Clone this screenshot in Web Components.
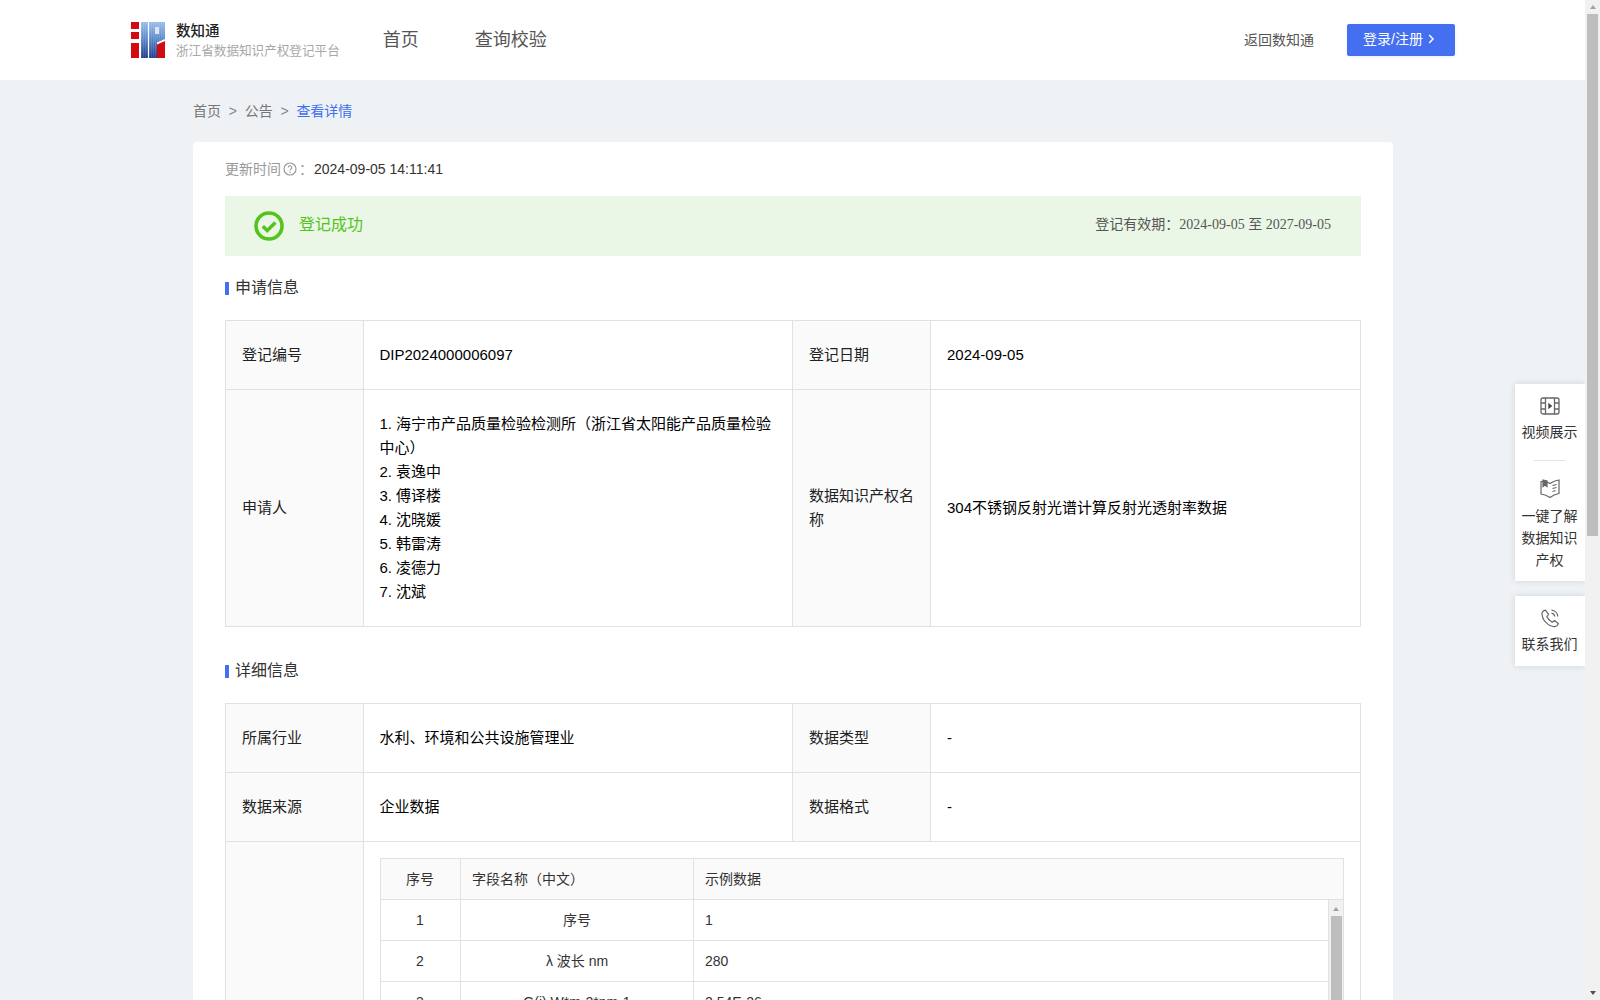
<!DOCTYPE html>
<html lang="zh-CN">
<head>
<meta charset="utf-8">
<title>查看详情</title>
<style>
html,body{margin:0;padding:0;height:1000px;overflow:hidden;background:#eef2f5}
body{font:14px/22px "Liberation Sans","Noto Sans CJK SC",sans-serif;color:#333}
::-webkit-scrollbar{display:none}
</style>
</head>
<body>
<app-shell>
  <app-header></app-header>
  <bread-crumb>
    <a>首页</a><a>公告</a><a current>查看详情</a>
  </bread-crumb>
  <detail-card>
    <update-line time="2024-09-05 14:11:41"></update-line>
    <status-banner status="登记成功" from="2024-09-05" to="2027-09-05"></status-banner>
    <section-title style="margin-top:21px">申请信息</section-title>
    <info-grid style="margin-top:21px">
      <info-label>登记编号</info-label>
      <info-value near>DIP2024000006097</info-value>
      <info-label>登记日期</info-label>
      <info-value>2024-09-05</info-value>
      <info-label>申请人</info-label>
      <info-value near>1. 海宁市产品质量检验检测所（浙江省太阳能产品质量检验中心）<br>2. 袁逸中<br>3. 傅译楼<br>4. 沈晓媛<br>5. 韩雷涛<br>6. 凌德力<br>7. 沈斌</info-value>
      <info-label>数据知识产权名称</info-label>
      <info-value>304不锈钢反射光谱计算反射光透射率数据</info-value>
    </info-grid>
    <section-title style="margin-top:33px">详细信息</section-title>
    <info-grid style="margin-top:21px">
      <info-label>所属行业</info-label>
      <info-value near>水利、环境和公共设施管理业</info-value>
      <info-label>数据类型</info-label>
      <info-value>-</info-value>
      <info-label>数据来源</info-label>
      <info-value near>企业数据</info-value>
      <info-label>数据格式</info-label>
      <info-value>-</info-value>
      <info-label></info-label>
      <info-value wide><field-table></field-table></info-value>
    </info-grid>
  </detail-card>
  <side-dock></side-dock>
  <page-scrollbar></page-scrollbar>
</app-shell>

<script>
function el(name, html, init){
  customElements.define(name, class extends HTMLElement{
    constructor(){
      super();
      this.attachShadow({mode:'open'}).innerHTML = html;
      if(init) this._init = init;
    }
    connectedCallback(){ if(this._init) this._init(this.shadowRoot, this); }
  });
}

el('app-shell', `<style>
:host{display:block;position:relative;height:1000px;width:1600px;overflow:hidden}
.page{width:1585px;height:1000px;overflow:hidden}
</style><div class="page"><slot></slot></div>`);

el('app-header', `<style>
:host{display:flex;align-items:center;height:80px;background:#fff;padding:0 130px 0 131px;box-sizing:border-box}
svg{display:block;flex:none}
.brand{margin:2px 0 0 11px;flex:none}
.t{font-size:14.5px;line-height:18px;font-weight:500;color:#222}
.s{font-size:12.6px;line-height:18px;color:#a8a8a8;margin-top:2px;white-space:nowrap}
nav{display:flex;gap:56px;margin-left:43px;font-size:18px;color:#555}
.sp{flex:1}
.back{color:#555;font-size:14px;margin:0 33px 1px 0}
.btn{display:flex;align-items:center;width:108px;height:32px;box-sizing:border-box;padding:0 0 2px 16px;background:#436ff0;color:#fff;border-radius:2px;box-shadow:0 1px 3px rgba(67,111,240,.12)}
.btn svg{margin-left:5px}
</style>
<svg width="34" height="36" viewBox="0 0 34 36">
  <defs>
    <linearGradient id="b" x1="0" y1="0" x2="0" y2="1"><stop offset="0" stop-color="#98bdea"/><stop offset=".45" stop-color="#5f8ccc"/><stop offset="1" stop-color="#1f3c8c"/></linearGradient>
    <pattern id="st" width="2" height="2" patternUnits="userSpaceOnUse"><rect width="1" height="2" fill="#fff" opacity=".12"/></pattern>
  </defs>
  <rect x="0" y="0" width="8" height="7" fill="#d40a12"/>
  <rect x="0" y="10" width="8" height="7" fill="#d40a12"/>
  <rect x="0" y="21" width="8" height="15" fill="#d40a12"/>
  <rect x="10" y="0" width="7" height="36" fill="url(#b)"/>
  <path d="M18 0H34V17L26 20.5V36H18Z" fill="url(#b)"/>
  <rect x="10" y="0" width="7" height="36" fill="url(#st)"/>
  <path d="M18 0H34V17L26 20.5V36H18Z" fill="url(#st)"/>
  <rect x="24" y="5" width="4" height="7" fill="#dbe6f6"/>
  <path d="M26 22.5L34 19V36H26Z" fill="#d40a12"/>
</svg>
<div class="brand"><div class="t">数知通</div><div class="s">浙江省数据知识产权登记平台</div></div>
<nav><span>首页</span><span>查询校验</span></nav>
<div class="sp"></div>
<div class="back">返回数知通</div>
<div class="btn">登录/注册<svg width="7" height="10" viewBox="0 0 7 10"><path d="M1.2 1L5 5L1.2 9" fill="none" stroke="#fff" stroke-width="1.5"/></svg></div>`);

el('bread-crumb', `<style>
:host{display:flex;height:62px;box-sizing:border-box;padding:20px 0 0 193px;color:#888;font-size:14px;line-height:22px}
::slotted(a){color:#777}
::slotted(a[current]){color:#3f6ff0}
::slotted(a:not(:last-child))::after{content:">";margin:0 7.75px;color:#888}
</style><slot></slot>`);

el('detail-card', `<style>
:host{display:block;width:1200px;box-sizing:border-box;margin-left:193px;padding:16px 32px 40px;background:#fff;border-radius:4px}
</style><slot></slot>`);

el('update-line', `<style>
:host{display:flex;align-items:center;color:#999;font-size:14px;line-height:22px}
svg{margin:0 0 0 2px}
.c{margin:0 1px 0 2px}
.v{color:#333}
</style><span>更新时间</span><svg width="14" height="14" viewBox="0 0 14 14"><circle cx="7" cy="7" r="6" fill="none" stroke="#999" stroke-width="1.2"/><path d="M5.2 5.6a1.8 1.8 0 1 1 2.7 1.5c-.6.4-.9.7-.9 1.4" fill="none" stroke="#999" stroke-width="1.1"/><circle cx="7" cy="10.3" r=".7" fill="#999"/></svg><span class="c">：</span><span class="v"></span>`,
(r,h)=>{r.querySelector('.v').textContent=h.getAttribute('time')});

el('status-banner', `<style>
:host{display:flex;align-items:center;height:60px;margin-top:16px;background:#ebf7e6;padding:0 30px 0 29px}
.st{margin:0 0 2px 15px;font-size:16px;color:#52c41a}
.sp{flex:1}
.r{color:#555;font-size:14px;margin-bottom:3px}
.d{font-family:"Liberation Serif","Noto Sans CJK SC",serif}
</style>
<svg width="30" height="30" viewBox="0 0 30 30"><circle cx="15" cy="15" r="13" fill="none" stroke="#52c41a" stroke-width="3.6"/><path d="M8.8 15.2l4.4 4.3 8.2-8" fill="none" stroke="#52c41a" stroke-width="3.4"/></svg>
<span class="st"></span><span class="sp"></span>
<span class="r">登记有效期：<span class="d"></span></span>`,
(r,h)=>{r.querySelector('.st').textContent=h.getAttribute('status');
r.querySelector('.d').textContent=h.getAttribute('from')+' 至 '+h.getAttribute('to')});

el('section-title', `<style>
:host{display:flex;align-items:center;font-size:16px;line-height:22px;color:#333}
i{display:block;width:4px;height:13px;background:#436ff0;margin:1px 6px 0 0}
</style><i></i><slot></slot>`);

el('info-grid', `<style>
:host{display:grid;grid-template-columns:138px 429px 138px 1fr;border-top:1px solid #e1e1e1;border-left:1px solid #e1e1e1;font-size:15px}
</style><slot></slot>`);

el('info-label', `<style>
:host{display:flex;align-items:center;box-sizing:border-box;padding:22px 16px;background:#fafafa;color:#222;line-height:24px;border-right:1px solid #e1e1e1;border-bottom:1px solid #e1e1e1}
div{margin-top:-1px}
</style><div><slot></slot></div>`);

el('info-value', `<style>
:host{display:flex;align-items:center;box-sizing:border-box;padding:22px 16px;color:#000;line-height:24px;border-right:1px solid #e1e1e1;border-bottom:1px solid #e1e1e1;min-width:0}
:host([near]){padding-left:15.4px;padding-right:16.6px}
:host([wide]){grid-column:span 3;padding:16px 16px 0;display:block}
</style><div><slot></slot></div>`);

el('field-table', `<style>
:host{display:block;border:1px solid #e1e1e1;border-bottom:0;color:#333;line-height:22px;font-size:14px}
.row{display:grid;grid-template-columns:80px 233px 1fr;border-bottom:1px solid #e1e1e1}
.row>div{height:40px;line-height:40px;border-right:1px solid #e1e1e1;padding:0 11px;text-align:center;white-space:nowrap;overflow:hidden}
.row>div:first-child{padding-right:12px}
.row>div:last-child{text-align:left;border-right:0}
.head{background:#fafafa}
.head>div:nth-child(2){text-align:left}
.body{display:flex;height:300px}
.rows{flex:1;min-width:0}
.bar{flex:none;width:14px;border-left:1px solid #e1e1e1;background:#f1f1f1;display:flex;flex-direction:column;align-items:center}
.bar b{display:block;width:0;height:0;margin:7px 0 5px;border:3.5px solid transparent;border-top:0;border-bottom:4px solid #a3a3a3}
.bar u{display:block;width:11px;flex:1;background:#bebebe}
</style>
<div class="row head"><div>序号</div><div>字段名称（中文）</div><div>示例数据</div></div>
<div class="body"><div class="rows">
<div class="row"><div>1</div><div>序号</div><div>1</div></div>
<div class="row"><div>2</div><div>λ 波长 nm</div><div>280</div></div>
<div class="row"><div>3</div><div>G(i) W*m-2*nm-1</div><div>2.54E-26</div></div>
</div><div class="bar"><b></b><u></u></div></div>`);

el('side-dock', `<style>
:host{position:absolute;right:15px;top:384px;width:70px;display:flex;flex-direction:column;gap:15px;color:#333;font-size:14px;line-height:22px;text-align:center}
.card{background:#fff;box-shadow:0 0 6px rgba(60,70,90,.18);padding:11px 0 10px}
.it{display:flex;flex-direction:column;align-items:center}
.it span{margin-right:1px}
svg{display:block;margin-bottom:4px;stroke:#666;fill:none}
hr{border:0;height:1px;background:#e4e4e4;width:32px;margin:17px auto 16px}
.bk{margin-bottom:6px}
</style>
<div class="card">
 <div class="it"><svg width="22" height="22" viewBox="0 0 22 22" stroke-width="1.3"><rect x="2" y="3" width="18" height="16" rx="2"/><path d="M6.5 3V19M15.5 3V19M2 8H6.5M2 14H6.5M15.5 8H20M15.5 14H20"/><path d="M9.3 7.8L13.3 11L9.3 14.2Z" fill="#444" stroke="none"/></svg><span>视频展示</span></div>
 <hr>
 <div class="it"><svg class="bk" width="22" height="22" viewBox="0 0 22 22" stroke-width="1.2"><path d="M2 4.5C5 4 8 4.5 11 6.5C14 4.5 17 3.5 20 3V16.5C17 17 14 18 11 20.5C8 18.5 5 17.5 2 17Z"/><path d="M4 3L8 4V9.5L6 8L4 9.5Z" fill="#666"/><path d="M13.5 8.5L17.5 7.5M13.5 11.5L17.5 10.5M13.5 14.5L16.5 13.5"/></svg><span>一键了解<br>数据知识<br>产权</span></div>
</div>
<div class="card" style="padding-bottom:11px">
 <div class="it"><svg width="22" height="22" viewBox="0 0 22 22" stroke-width="1.2"><path d="M6.5 3.2C5 3.5 3 5 3 7C3.2 13 9 19.3 15.5 19.7C17.5 19.5 19 18 19.3 16.5L15.5 13.5L13.2 15.3C11 14.2 8.6 11.5 7.8 9.6L9.6 7.3Z"/><path d="M12.5 3.2A6.8 6.8 0 0 1 18.8 9.5M12.5 6.2A4 4 0 0 1 15.8 9.5"/></svg><span>联系我们</span></div>
</div>`);

el('page-scrollbar', `<style>
:host{position:absolute;right:0;top:0;bottom:0;width:15px;background:#f1f1f1;display:flex;flex-direction:column;align-items:center}
b{display:block;width:0;height:0;margin:5px 0 5px;border:3.5px solid transparent;border-top:0;border-bottom:4px solid #a3a3a3;flex:none}
u{display:block;width:11px;height:522px;background:#bebebe;flex:none}
s{flex:1}
i{display:block;width:0;height:0;margin-bottom:5px;border:3.5px solid transparent;border-bottom:0;border-top:4px solid #505050}
</style><b></b><u></u><s></s><i></i>`);
</script>
</body>
</html>
